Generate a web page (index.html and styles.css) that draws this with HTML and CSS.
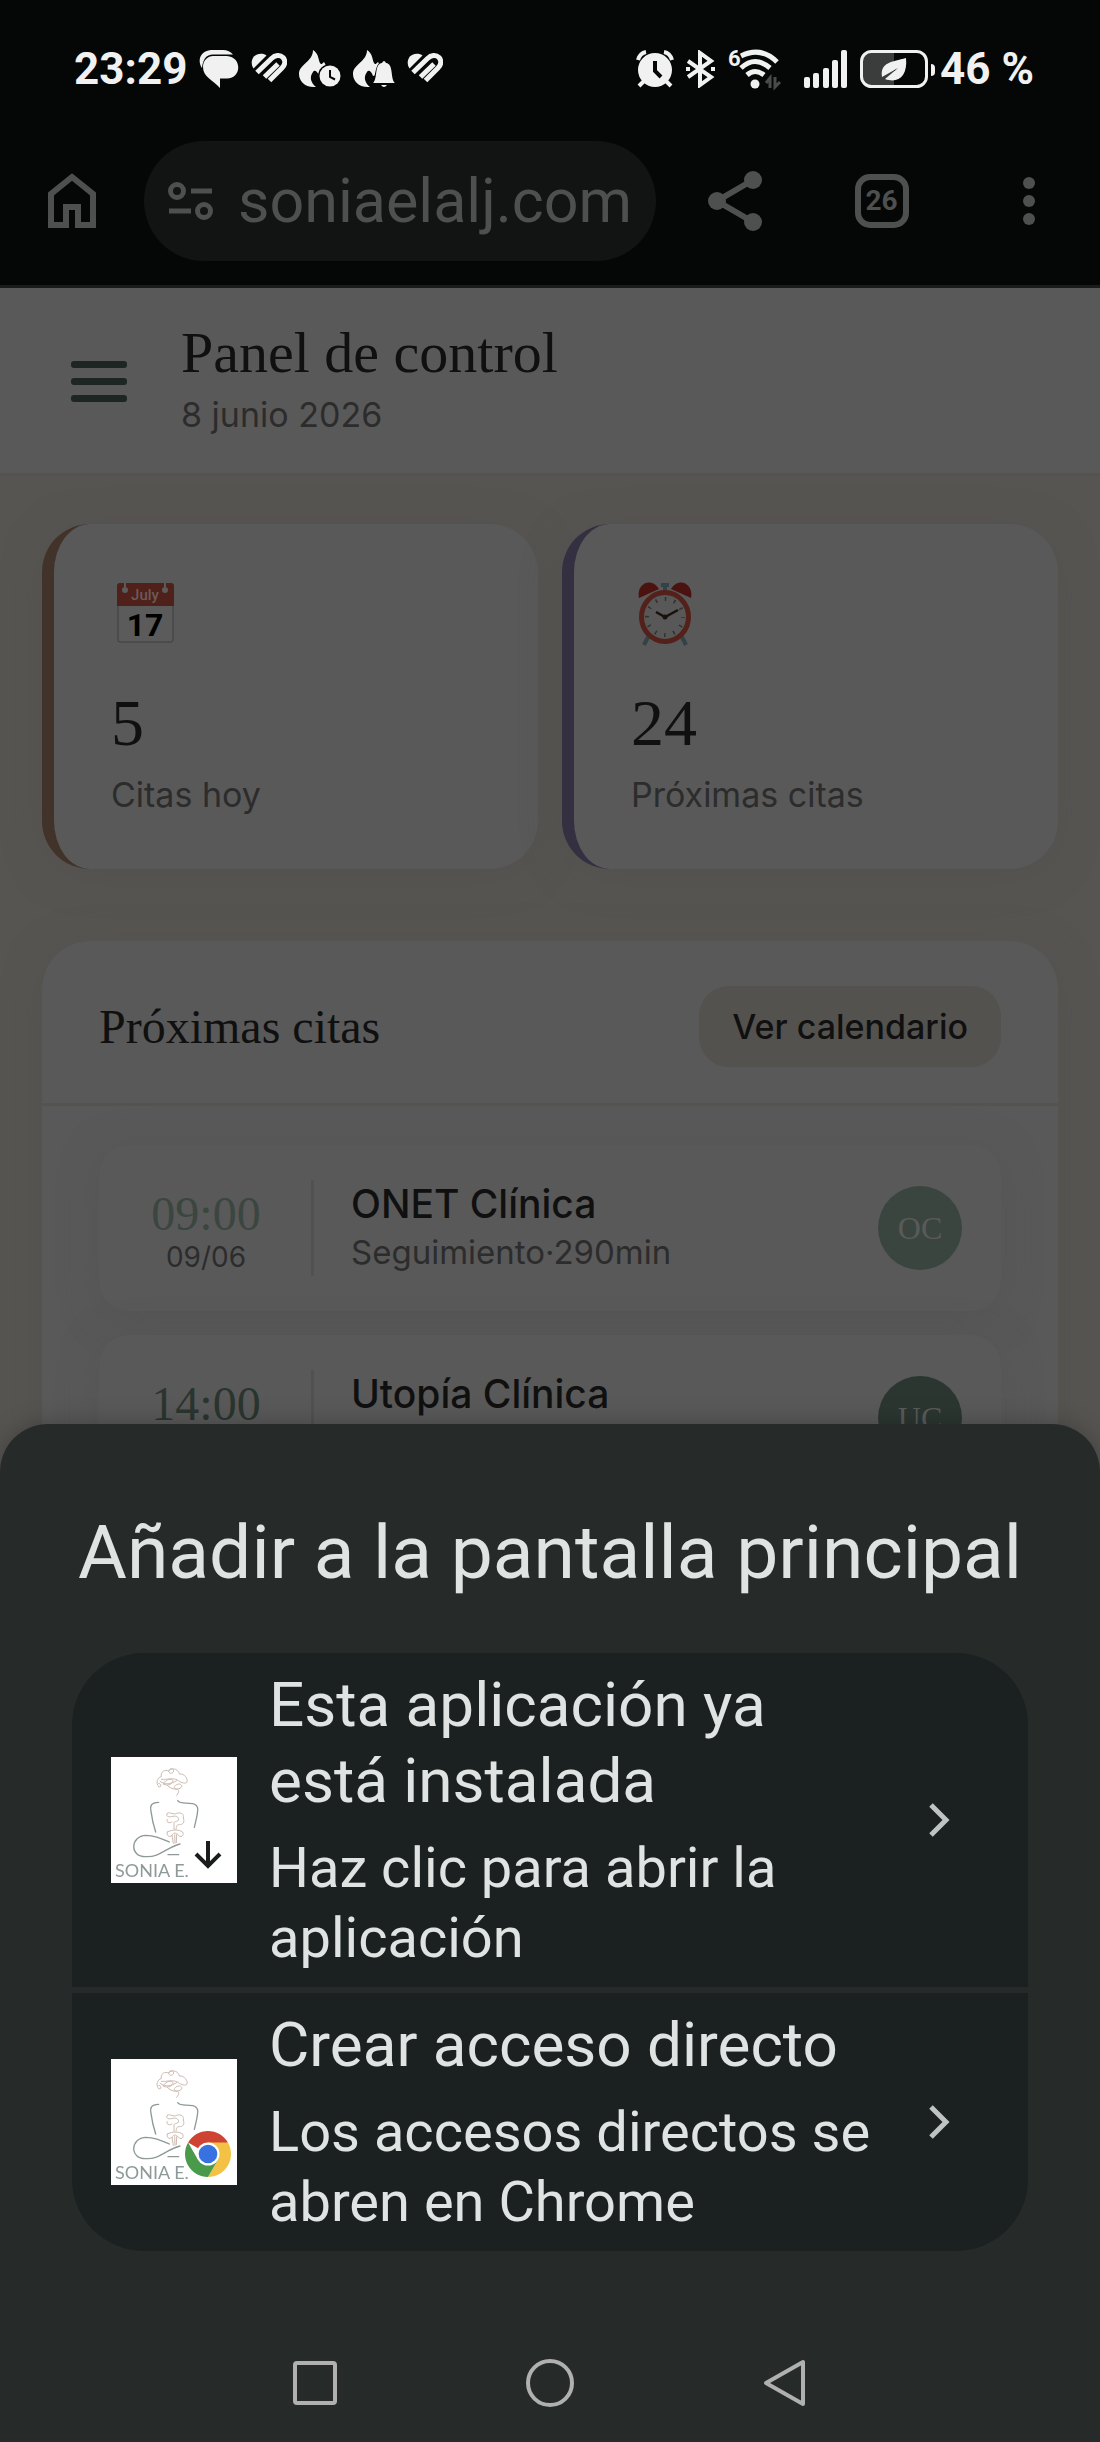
FILE: index.html
```html
<!DOCTYPE html>
<html lang="es">
<head>
<meta charset="utf-8">
<meta name="viewport" content="width=device-width, initial-scale=1">
<title>Panel de control</title>
<link rel="stylesheet" href="styles.css">
</head>
<body>
<svg class="defs" aria-hidden="true">
  <symbol id="heart" viewBox="0 0 36 32">
    <path d="M2.500 15.500 C-1 10 1 4 5 2 C9 0 13 0.500 15.500 2.500 L3 15Z" fill="currentColor"/>
    <path d="M6 19.500 L20.500 5.500 C24 2 29 1.500 32 4.500 C35 8 34 12 31 15 L18.500 27.500 M13.500 24 L27 11" fill="none" stroke="currentColor" stroke-width="5"/>
  </symbol>
  <symbol id="flame" viewBox="0 0 42 38">
    <path d="M14 0 C20 4 19 9 21 13 C22 15 23 14 25 12 C28 16 27 20 27 24 L20 26 C18 20 15 20 14 22 C10 27 12 33 17 37 C6 38 0 31 0 24 C0 14 14 12 14 0Z" fill="currentColor"/>
  </symbol>
  <symbol id="logo" viewBox="93 81 378 378">
    <path fill="#fff" d="M93 81h378v378H93z"/>
    <g fill="none" stroke-linecap="round" stroke-linejoin="round">
      <g stroke="#cdbcb2" stroke-width="3">
        <path d="M236 170 C226 160 232 142 244 140 C240 126 256 116 266 124 C268 112 284 114 280 126 C274 134 262 128 268 120 C282 112 296 120 298 132 C312 130 326 146 320 158 C312 162 300 156 292 150 C276 142 262 150 244 148 M236 170 C244 176 246 160 236 160 M240 154 C258 168 276 160 290 152 M250 162 C258 142 284 146 278 156 C272 168 254 166 250 162 M262 166 C274 182 304 180 306 168 C298 152 276 172 284 176 C298 178 300 184 290 196"/>
        <path d="M262 250 C272 244 280 256 290 250 C304 246 312 252 310 264 C314 276 310 284 298 284 C288 284 290 290 288 298 M262 250 C256 258 264 262 274 260 C288 256 296 260 296 270 C292 276 280 272 282 282 L282 298 M262 268 C256 276 268 282 276 276 M262 306 C278 298 296 298 308 306 C314 318 300 326 292 312 C286 308 280 308 276 316 C268 324 258 316 262 306 M276 316 L280 340 M284 314 L285 340 M290 314 L289 338"/>
      </g>
      <g stroke="#8e9a98" stroke-width="4">
        <path d="M236 217 C212 218 210 228 213 244 C216 268 220 284 227 306"/>
        <path d="M293 212 C302 224 318 217 338 221 C358 226 354 240 350 262 L343 292"/>
        <path d="M268 336 C240 324 222 316 198 316 C150 318 148 382 198 380 C240 382 256 354 300 342 M264 374 L296 374"/>
      </g>
    </g>
  </symbol>
</svg>

<div class="status">
  <div class="status-group">
    <span class="status-text">23:29</span>
    <svg width="40" height="38" viewBox="0 0 40 38"><path d="M3 18 C-2 11 1 1 12 0 H24 C28 0 32 2 34 4.500 H14 C7 5 4 9 3 18Z" fill="currentColor"/><path d="M14 6 H28 C43 7 43 28 28 28.500 H21 V38 C14 30 4 27 4 17 C4 10 9 6 14 6Z" fill="currentColor"/></svg>
    <svg width="36" height="32"><use href="#heart"/></svg>
    <svg width="42" height="38" viewBox="0 0 42 38"><use href="#flame"/><circle cx="31" cy="26" r="12" fill="#040706"/><circle cx="31" cy="26" r="10.500" fill="currentColor"/><path d="M31 20v7l5 2.500" fill="none" stroke="#040706" stroke-width="2"/></svg>
    <svg width="42" height="38" viewBox="0 0 42 38"><use href="#flame"/><path d="M18 34 C24 29 20 12 31 11 C42 12 38 29 42 34Z" fill="#040706"/><path d="M20 33 C25 29 21 14 29 13 Q31 9 33 13 C41 14 37 29 42 33Z M28 35h6q-3 4-6 0z" fill="currentColor"/></svg>
    <svg width="36" height="32"><use href="#heart"/></svg>
  </div>
  <div class="status-group status-right">
    <svg width="38" height="38" viewBox="0 0 38 38" fill="none" stroke="currentColor"><circle cx="19" cy="20" r="17" fill="currentColor" stroke="none"/><path d="M2 10 Q4 3 10 2 M36 10 Q34 3 28 2" stroke-width="4"/><path d="M8 31l-5 5M30 31l5 5" stroke-width="4"/><path d="M19 11v10l6 6" stroke="#040706" stroke-width="4"/></svg>
    <svg width="30" height="38" viewBox="0 0 30 38" fill="none" stroke="currentColor" stroke-width="4"><path d="M2 11 L25 27 L14 35 V3 L25 11 L2 27"/><path d="M0 19h4M25 19h4" stroke-width="4"/></svg>
    <svg class="wifi" width="54" height="40" viewBox="0 0 54 40" fill="none" stroke="currentColor" stroke-width="5"><text x="0" y="17" class="wifi-six">6</text><path d="M13 7 Q33 -3 49 13 M13 19 Q27 6 42 19 M19 26 Q27 19 36 26"/><circle cx="27" cy="35" r="4.500" fill="currentColor" stroke="none"/><path d="M42 39V29l-4 5M47 28v10l5-5" stroke="#4a4c4b" stroke-width="3"/></svg>
    <svg class="signal" width="44" height="38" viewBox="0 0 44 38" fill="currentColor"><rect y="27" width="6" height="11" rx="2"/><rect x="9" y="23" width="6" height="15" rx="2"/><rect x="19" y="18" width="6" height="20" rx="2"/><rect x="28" y="10" width="6" height="28" rx="2"/><rect x="37" y="0" width="6" height="38" rx="2"/></svg>
    <svg width="76" height="38" viewBox="0 0 76 38"><path d="M10 3h24v32H10q-7 0-7-7V10q0-7 7-7z" fill="#3b3d3c"/><rect x="1.500" y="1.500" width="65" height="35" rx="10" fill="none" stroke="currentColor" stroke-width="3"/><path d="M71 14q4 0 4 4v4q0 4-4 4z" fill="currentColor"/><path d="M22 27 C20 12 32 12 46 8 C48 26 38 34 25 29 L38 18 L22 27Z" fill="currentColor"/></svg>
    <span class="status-text">46 %</span>
  </div>
</div>

<nav class="toolbar" aria-label="Navegador">
  <button class="bare" aria-label="Inicio"><svg width="54" height="56" viewBox="0 0 54 56" fill="none" stroke="currentColor" stroke-width="6"><path d="M6 52V21L27 4L48 21V52H33V34H21V52Z"/></svg></button>
  <a class="address" href="#">
    <svg width="46" height="40" viewBox="0 0 46 40" fill="none" stroke="currentColor" stroke-width="5"><circle cx="9" cy="10" r="6.500"/><circle cx="36" cy="30" r="6.500"/><path d="M23 10h21M1 30h22"/></svg>
    <span>soniaelalj.com</span>
  </a>
  <div class="tools">
    <button class="bare" aria-label="Compartir"><svg width="54" height="60" viewBox="0 0 54 60" fill="currentColor"><path d="M45 9L9 30L45 51" fill="none" stroke="currentColor" stroke-width="6"/><circle cx="45" cy="9" r="9"/><circle cx="9" cy="30" r="9"/><circle cx="45" cy="51" r="9"/></svg></button>
    <button class="bare"><span class="tabs">26</span></button>
    <button class="bare" aria-label="Más"><svg width="12" height="48" viewBox="0 0 12 48" fill="currentColor"><circle cx="6" cy="6" r="6"/><circle cx="6" cy="24" r="6"/><circle cx="6" cy="42" r="6"/></svg></button>
  </div>
</nav>

<header class="page-head">
  <button class="bare burger" aria-label="Menú"><span></span><span></span><span></span></button>
  <div>
    <h1>Panel de control</h1>
    <p class="muted">8 junio 2026</p>
  </div>
</header>

<main>
  <section class="stats">
    <article class="stat stat-today">
      <svg width="64" height="64" viewBox="0 0 64 64"><rect x="7" y="3" width="55" height="58" rx="2" fill="#5b5b5b" stroke="#3f3f3f"/><path d="M6 25V5q0-3 3-3h51q3 0 3 3v20z" fill="#50201b"/><path d="M14 2v7M54 2v7" stroke="#5b5b5b" stroke-width="2"/><circle cx="14" cy="9" r="3" fill="#5b5b5b"/><circle cx="54" cy="9" r="3" fill="#5b5b5b"/><text x="34" y="19" class="cal-month">July</text><text x="34" y="55" class="cal-day">17</text></svg>
      <strong>5</strong>
      <span class="muted">Citas hoy</span>
    </article>
    <article class="stat stat-next">
      <svg width="64" height="68" viewBox="0 0 64 68"><path d="M17 58l-4 8M51 58l4 8M34 6v8M30 6h8" stroke="#324248" stroke-width="4"/><path d="M8 19C5 5 20-3 28 10zM60 19C63 5 48-3 40 10z" fill="#4b1310"/><ellipse cx="34" cy="38" rx="23.500" ry="24.500" fill="#585858" stroke="#54201a" stroke-width="5"/><circle cx="34" cy="38" r="18" fill="none" stroke="#33302c" stroke-width="4" stroke-dasharray="1.500 7.925" stroke-dashoffset=".75"/><path d="M25 33l9 5 13-7" fill="none" stroke="#1b100d" stroke-width="2.500"/><circle cx="34" cy="38" r="2.500" fill="#1b100d"/></svg>
      <strong>24</strong>
      <span class="muted">Próximas citas</span>
    </article>
  </section>

  <section class="panel">
    <div class="panel-head">
      <h2>Próximas citas</h2>
      <button class="pill">Ver calendario</button>
    </div>
    <div class="visits">
      <article class="visit">
        <div class="when"><time>09:00</time><span>09/06</span></div>
        <div class="who"><h3>ONET Clínica</h3><p>Seguimiento·290min</p></div>
        <span class="avatar">OC</span>
      </article>
      <article class="visit visit-dark">
        <div class="when"><time>14:00</time><span>&nbsp;</span></div>
        <div class="who"><h3>Utopía Clínica</h3><p>&nbsp;</p></div>
        <span class="avatar">UC</span>
      </article>
    </div>
  </section>
</main>

<section class="sheet" role="dialog" aria-labelledby="sheet-title">
  <h2 id="sheet-title">Añadir a la pantalla principal</h2>
  <div class="choices">
    <button class="choice">
      <svg width="126" height="126" viewBox="0 0 126 126"><use href="#logo"/><text x="4" y="120" class="logo-word">SONIA E.</text><circle cx="99" cy="98" r="24" fill="#fff"/><path d="M97 84v25M85 97l12 12 12-12" fill="none" stroke="#1b1d1d" stroke-width="4"/></svg>
      <span class="choice-text"><span class="choice-title">Esta aplicación ya está instalada</span><span class="choice-sub">Haz clic para abrir la aplicación</span></span>
      <svg class="chevron" width="24" height="36" viewBox="0 0 24 36"><path d="M3 3l15 15L3 33" fill="none" stroke="currentColor" stroke-width="5"/></svg>
    </button>
    <button class="choice">
      <svg width="126" height="126" viewBox="0 0 126 126"><use href="#logo"/><text x="4" y="120" class="logo-word">SONIA E.</text><circle cx="97" cy="95" r="25" fill="#fff"/><path d="M97 95L77.100 83.500A23 23 0 0 1 116.900 83.500Z" fill="#cf4332"/><path d="M97 83.500H116.900A23 23 0 0 1 97 118L107 100.800Z" fill="#f3c244"/><path d="M77.100 83.500A23 23 0 0 0 97 118L107 100.800L97 95L87 100.800Z" fill="#4a9a4b"/><circle cx="97" cy="95" r="11.500" fill="#fff"/><circle cx="97" cy="95" r="9.300" fill="#3871e0"/></svg>
      <span class="choice-text"><span class="choice-title">Crear acceso directo</span><span class="choice-sub">Los accesos directos se abren en Chrome</span></span>
      <svg class="chevron" width="24" height="36" viewBox="0 0 24 36"><path d="M3 3l15 15L3 33" fill="none" stroke="currentColor" stroke-width="5"/></svg>
    </button>
  </div>
  <div class="system-nav">
    <button class="bare" aria-label="Recientes"><svg width="48" height="48" viewBox="0 0 48 48"><rect x="4" y="4" width="40" height="40" rx="2"/></svg></button>
    <button class="bare" aria-label="Inicio"><svg width="48" height="48" viewBox="0 0 48 48"><circle cx="24" cy="24" r="22"/></svg></button>
    <button class="bare" aria-label="Atrás"><svg width="48" height="48" viewBox="0 0 48 48"><path d="M42 3v42L5 24z"/></svg></button>
  </div>
</section>
</body>
</html>
```
FILE: styles.css
```css
* { box-sizing: border-box; margin: 0; }

:root {
  --sans: Roboto, "Noto Sans", sans-serif;
  --app: Inter, "Noto Sans", sans-serif;
  --serif: "Liberation Serif", serif;
  --black: #040706;
  --surface: #595959;
  --sand: #545350;
  --ink: #101010;
  --muted: #2c2c2c;
}

body {
  min-height: 100vh;
  background: #575552;
  color: var(--ink);
  font-family: var(--app);
}

button { border: 0; font: inherit; color: inherit; text-align: left; }
svg { display: block; flex: none; }
.defs { position: absolute; width: 0; height: 0; }
.bare { display: grid; place-items: center; padding: 0; background: none; }

/* Status bar */
.status {
  display: flex;
  justify-content: space-between;
  height: 137px;
  padding: 0 66px 0 74px;
  background: var(--black);
  color: #f1f1f1;
  font-family: var(--sans);
}
.status-group { display: flex; align-items: center; gap: 12px; }
.status-text { font-size: 44px; font-weight: 700; line-height: 52px; white-space: nowrap; }
.status-right .status-text { margin-left: -8px; }
.wifi { overflow: visible; }
.signal { margin-left: 10px; }
.wifi-six { font: 700 22px var(--sans); fill: currentColor; stroke: none; }

/* Browser toolbar */
.toolbar {
  display: flex;
  align-items: center;
  padding: 4px 0 24px 45px;
  border-bottom: 3px solid #1a1b1a;
  background: var(--black);
  color: #4e504f;
  font-family: var(--sans);
}
.address {
  display: flex;
  flex: 1;
  align-items: center;
  gap: 24px;
  height: 120px;
  margin: 0 5px 0 45px;
  padding: 0 24px;
  border-radius: 60px;
  background: #111413;
  color: inherit;
  font-size: 61px;
  text-decoration: none;
}
.tools { display: grid; grid-template-columns: repeat(3, 147px); }
.tabs {
  display: grid;
  place-items: center;
  width: 54px;
  height: 54px;
  border: 6px solid;
  border-radius: 15px;
  font-size: 28px;
  font-weight: 700;
  line-height: 32px;
}

/* Page header */
.page-head {
  display: flex;
  align-items: center;
  gap: 54px;
  padding: 31px 71px 30px;
  border-bottom: 3px solid var(--sand);
  background: var(--surface);
}
.burger { gap: 10px; width: 56px; }
.burger span { width: 56px; height: 7px; border-radius: 3px; background: #1d2622; }
h1, h2, h3 { font-weight: 400; }
h1 { font: 400 58px/68px var(--serif); }
.muted { color: var(--muted); font-size: 34px; line-height: 48px; }
.page-head .muted { line-height: 56px; }

/* Dashboard */
main { padding: 48px 42px; }
.stats { display: grid; grid-template-columns: 1fr 1fr; gap: 24px; }
.stat {
  display: flex;
  flex-direction: column;
  padding: 55px 57px 50px;
  border-left: 12px solid;
  border-radius: 48px;
  background: var(--surface);
  box-shadow: 0 6px 36px #504e4b80;
}
.stat svg { height: 68px; margin-bottom: 40px; }
.stat-today { border-color: #413329; }
.stat-next { border-color: #353041; }
.stat strong { margin-bottom: 12px; font: 400 66px/72px var(--serif); }

.panel {
  margin-top: 72px;
  border-radius: 48px;
  background: var(--surface);
  box-shadow: 0 6px 36px #504e4b80;
}
.panel-head {
  display: flex;
  align-items: center;
  justify-content: space-between;
  padding: 45px 57px 36px;
  border-bottom: 3px solid var(--sand);
}
.panel-head h2 { font: 400 48px/56px var(--serif); }
.pill {
  padding: 16px 33px;
  border-radius: 30px;
  background: #53524f;
  font-size: 34px;
  font-weight: 500;
  line-height: 49px;
}
.visits { display: flex; flex-direction: column; gap: 24px; padding: 39px 57px; }
.visit {
  display: flex;
  align-items: center;
  padding: 35px 39px;
  border-radius: 30px;
  background: var(--surface);
  box-shadow: 0 6px 36px #51515180;
}
.when { display: flex; flex-direction: column; width: 136px; padding-top: 6px; text-align: center; }
.when time { color: #3b4641; font: 400 48px/52px var(--serif); }
.when span { color: var(--muted); font-size: 28px; line-height: 34px; }
.who { flex: 1; margin-left: 37px; padding-left: 37px; border-left: 3px solid #51514f; }
.who h3 { font-size: 39px; font-weight: 500; line-height: 48px; }
.who p { color: var(--muted); font-size: 33px; line-height: 48px; }
.avatar {
  display: grid;
  place-items: center;
  width: 84px;
  height: 84px;
  border-radius: 50%;
  background: #3b4540;
  color: #595b59;
  font: 400 32px/36px var(--serif);
}
.visit-dark time { color: #2a352f; }
.visit-dark .avatar { background: #2b3631; }
.cal-month { fill: #6b5a58; font: 500 15px var(--sans); text-anchor: middle; }
.cal-day { fill: #000; font: 700 32px var(--sans); text-anchor: middle; }

/* Install sheet, pinned over the page */
.sheet {
  position: fixed;
  right: 0;
  bottom: 0;
  left: 0;
  padding: 84px 72px 0;
  border-radius: 48px 48px 0 0;
  background: #262a29;
  box-shadow: 0 0 24px #00000040;
  color: #dfe4e2;
  font-family: var(--sans);
}
.sheet h2 { font-size: 75px; line-height: 88px; text-align: center; white-space: nowrap; }
.choices {
  display: flex;
  flex-direction: column;
  gap: 6px;
  margin: 57px 0 73px;
  overflow: hidden;
  border-radius: 72px;
}
.choice {
  display: flex;
  align-items: center;
  padding: 14px 76px 14px 39px;
  background: #1b2120;
}
.choice-text { display: flex; flex: 1; flex-direction: column; gap: 14px; margin: 0 40px 0 32px; }
.choice-title { max-width: 590px; font-size: 62px; line-height: 76px; }
.choice-sub { font-size: 56px; line-height: 70px; }
.chevron { color: #bfc4c2; }
.logo-word { fill: #8e9a98; font: 400 18px Lato, sans-serif; }
.system-nav { display: flex; justify-content: center; gap: 187px; height: 118px; }
.system-nav svg { fill: none; stroke: #b0b0b0; stroke-width: 4; stroke-linejoin: round; }
```
